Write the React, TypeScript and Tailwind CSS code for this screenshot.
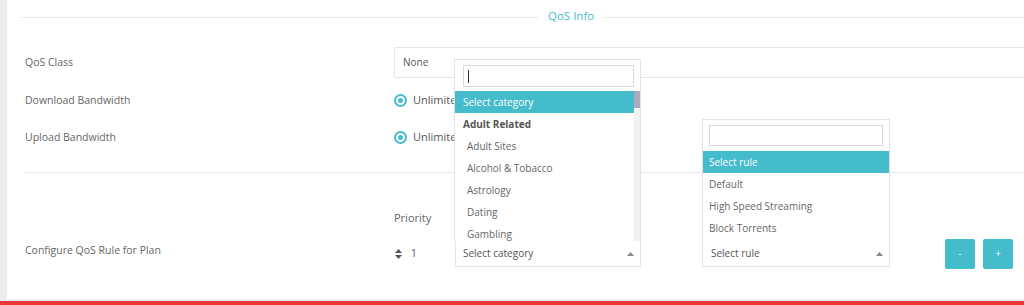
import React from 'react';

const font = { fontFamily: '"Open Sans", "Liberation Sans", sans-serif' };

const categories = ['Adult Sites', 'Alcohol & Tobacco', 'Astrology', 'Dating', 'Gambling'];
const rules = ['Default', 'High Speed Streaming', 'Block Torrents'];

const Radio: React.FC<{ label: string }> = ({ label }) => (
  <div className="flex items-center gap-[6px]">
    <span className="w-[13px] h-[13px] rounded-full border-[2px] border-[#45bccc] flex items-center justify-center">
      <span className="w-[5px] h-[5px] rounded-full bg-[#45bccc]" />
    </span>
    <span className="text-[11px] text-[#555]">{label}</span>
  </div>
);

const Caret = () => (
  <svg width="7" height="4" viewBox="0 0 7 4" className="shrink-0">
    <path d="M0 4 L3.5 0 L7 4 Z" fill="#888" />
  </svg>
);

const SortIcon = () => (
  <svg width="7" height="10" viewBox="0 0 7 10">
    <path d="M0 4 L3.5 0 L7 4 Z M0 6 L3.5 10 L7 6 Z" fill="#555" />
  </svg>
);

const CategorySelect: React.FC = () => (
  <div className="relative w-[186px] h-[27px] border border-[#e3e3e3] bg-white flex items-center justify-between pl-[7px] pr-[6px] shrink-0">
    <span className="text-[10px] text-[#555]">Select category</span>
    <Caret />
    {/* open list */}
    <div className="absolute left-[-2px] right-[-1px] bottom-full h-[182px] bg-white border border-[#e3e3e3] border-b-0 pt-[5px] overflow-hidden">
      <div className="mx-[8px] mr-[6px] h-[22px] border border-[#d9d9d9] flex items-center pl-[4px]">
        <span className="w-px h-[13px] bg-[#333]" />
      </div>
      <div className="flex mt-[4px]">
        <div className="flex-1">
          <div className="h-[22px] bg-[#45bccc] text-white text-[10px] flex items-center pl-[8px]">Select category</div>
          <div className="h-[22px] text-[10px] font-bold text-[#555] flex items-center pl-[8px]">Adult Related</div>
          {categories.map((c) => (
            <div key={c} className="h-[22px] text-[10px] text-[#666] flex items-center pl-[12px]">
              {c}
            </div>
          ))}
        </div>
        <div className="w-[6px] bg-[#f1f1f1] h-[160px]">
          <div className="h-[17px] bg-[#a9abbb]" />
        </div>
      </div>
    </div>
  </div>
);

const RuleSelect: React.FC = () => (
  <div className="relative w-[188px] h-[27px] border border-[#e3e3e3] bg-white flex items-center justify-between pl-[8px] pr-[6px] shrink-0">
    <span className="text-[10px] text-[#555]">Select rule</span>
    <Caret />
    <div className="absolute left-[-1px] right-[-1px] bottom-full h-[122px] bg-white border border-[#e3e3e3] border-b-0 pt-[5px] overflow-hidden">
      <div className="mx-[6px] h-[21px] border border-[#d9d9d9]" />
      <div className="mt-[5px]">
        <div className="h-[22px] bg-[#45bccc] text-white text-[10px] flex items-center pl-[6px]">Select rule</div>
        {rules.map((r) => (
          <div key={r} className="h-[22px] text-[10px] text-[#666] flex items-center pl-[6px]">
            {r}
          </div>
        ))}
      </div>
    </div>
  </div>
);

export default function App() {
  return (
    <div className="w-[1024px] h-[305px] bg-[#ececec] flex flex-col overflow-hidden" style={font}>
      <div className="flex flex-1 min-h-0">
        <div className="w-[7px] shrink-0" />
        <div className="flex-1 bg-white relative overflow-hidden pl-[14px]">
          {/* legend */}
          <div className="h-[34px] flex items-center">
            <div className="w-[517px] h-px bg-[#e8e8e8] shrink-0" />
            <span className="mx-[10px] text-[11.5px] text-[#45bccc] -mt-[2px]">QoS Info</span>
            <div className="flex-1 h-px bg-[#e8e8e8]" />
          </div>

          <div className="pl-[4px]">
            {/* QoS class */}
            <div className="mt-[13px] flex items-center">
              <div className="w-[369px] shrink-0 text-[10.5px] text-[#666]">QoS Class</div>
              <div className="w-[660px] h-[31px] border border-[#e5e5e5] rounded-[2px] flex items-center pl-[8px] shrink-0">
                <span className="text-[10px] text-[#555]">None</span>
              </div>
            </div>

            <div className="mt-[4px] h-[37px] flex items-center">
              <div className="w-[369px] shrink-0 text-[10.5px] text-[#666]">Download Bandwidth</div>
              <Radio label="Unlimited" />
            </div>
            <div className="h-[37px] flex items-center">
              <div className="w-[369px] shrink-0 text-[10.5px] text-[#666]">Upload Bandwidth</div>
              <Radio label="Unlimited" />
            </div>

            <div className="mt-[16px] h-px bg-[#e8e8e8]" />

            {/* QoS rule */}
            <div className="flex">
              <div className="w-[369px] shrink-0 flex flex-col">
                <div className="mt-[67px] h-[27px] flex items-center text-[10.5px] text-[#666] -translate-y-[3px]">
                  Configure QoS Rule for Plan
                </div>
              </div>
              <div className="flex-1">
                <div className="mt-[38px] h-[15px] flex items-center text-[11px] text-[#666]">Priority</div>
                <div className="mt-[14px] h-[27px] flex items-center">
                  <div className="w-[61px] shrink-0 flex items-center gap-[9px] pl-[1px]">
                    <SortIcon />
                    <span className="text-[10px] text-[#555]">1</span>
                  </div>
                  <CategorySelect />
                  <div className="w-[61px] shrink-0" />
                  <RuleSelect />
                  <div className="w-[55px] shrink-0" />
                  <button className="w-[30px] h-[30px] shrink-0 rounded-[2px] bg-[#45bccc] text-white text-[9px] flex items-center justify-center">-</button>
                  <div className="w-[8px] shrink-0" />
                  <button className="w-[30px] h-[30px] shrink-0 rounded-[2px] bg-[#45bccc] text-white text-[10px] flex items-center justify-center">+</button>
                </div>
              </div>
            </div>
          </div>
        </div>
      </div>
      <div className="h-[2px]" />
      <div className="h-[4px] bg-[#ef3535]" />
    </div>
  );
}
